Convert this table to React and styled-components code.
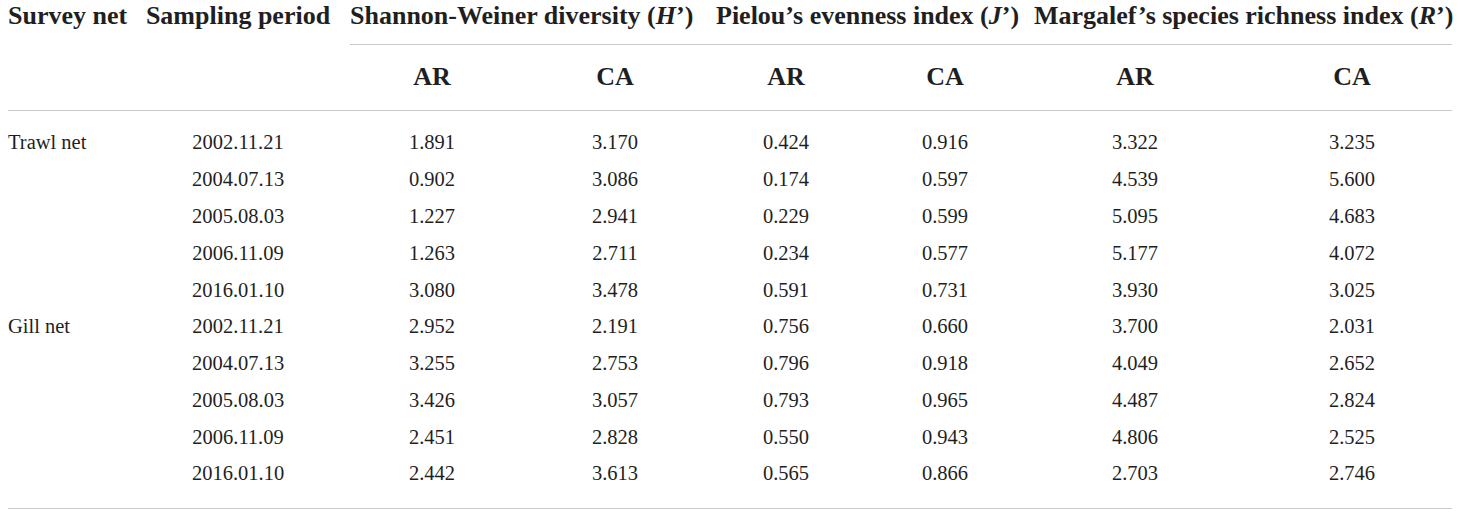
import React from "react";
import styled, { createGlobalStyle } from "styled-components";

const Global = createGlobalStyle`
  html, body { margin: 0; padding: 0; background: #fff; }
  body { font-family: "Liberation Serif", "Times New Roman", serif; color: #1f1f1f; }
`;

const Wrap = styled.div`
  padding: 0 8px;
`;

const Table = styled.table`
  width: 1444px;
  table-layout: fixed;
  border-collapse: collapse;
  border-spacing: 0;
`;

const HeadCell = styled.th`
  font-weight: 700;
  font-size: 26px;
  line-height: 30px;
  padding: 0;
  white-space: nowrap;
  text-align: ${(p) => p.$align || "center"};
  vertical-align: middle;
`;

const TopRow = styled.tr`
  height: 44px;
  & > th {
    vertical-align: top;
    padding-top: 1px;
  }
`;

const GroupCell = styled(HeadCell)`
  border-bottom: 1px solid #c9c9c9;
`;

const SubCell = styled(HeadCell)`
  padding-left: ${(p) => p.$pl || 0}px;
`;

const SubRow = styled.tr`
  height: 66px;
  & > th {
    border-bottom: 1px solid #c9c9c9;
  }
`;

const BodyRow = styled.tr`
  & > td {
    height: 36.78px;
    padding-top: ${(p) => (p.$first ? "13.6px" : "0")};
    padding-bottom: ${(p) => (p.$last ? "16.6px" : "0")};
    border-bottom: ${(p) => (p.$last ? "1px solid #c9c9c9" : "none")};
  }
`;

const Cell = styled.td`
  font-size: 20.5px;
  line-height: 24px;
  padding-left: ${(p) => p.$pl || 0}px;
  padding-right: 0;
  white-space: nowrap;
  vertical-align: middle;
  text-align: ${(p) => p.$align || "center"};
`;

const Sym = styled.i`
  font-style: italic;
`;

const COLS = [118, 224, 164, 202, 140, 178, 202, 216];

const DATA = [
  ["Trawl net", "2002.11.21", "1.891", "3.170", "0.424", "0.916", "3.322", "3.235"],
  ["", "2004.07.13", "0.902", "3.086", "0.174", "0.597", "4.539", "5.600"],
  ["", "2005.08.03", "1.227", "2.941", "0.229", "0.599", "5.095", "4.683"],
  ["", "2006.11.09", "1.263", "2.711", "0.234", "0.577", "5.177", "4.072"],
  ["", "2016.01.10", "3.080", "3.478", "0.591", "0.731", "3.930", "3.025"],
  ["Gill net", "2002.11.21", "2.952", "2.191", "0.756", "0.660", "3.700", "2.031"],
  ["", "2004.07.13", "3.255", "2.753", "0.796", "0.918", "4.049", "2.652"],
  ["", "2005.08.03", "3.426", "3.057", "0.793", "0.965", "4.487", "2.824"],
  ["", "2006.11.09", "2.451", "2.828", "0.550", "0.943", "4.806", "2.525"],
  ["", "2016.01.10", "2.442", "3.613", "0.565", "0.866", "2.703", "2.746"],
];

const SUBS = ["AR", "CA", "AR", "CA", "AR", "CA"];

export default function App() {
  return (
    <Wrap>
      <Global />
      <Table>
        <colgroup>
          {COLS.map((w, i) => (
            <col key={i} style={{ width: w }} />
          ))}
        </colgroup>
        <thead>
          <TopRow>
            <HeadCell $align="left">Survey net</HeadCell>
            <HeadCell>Sampling period</HeadCell>
            <GroupCell colSpan={2} $align="left">
              Shannon-Weiner diversity (<Sym>H</Sym>’)
            </GroupCell>
            <GroupCell colSpan={2} $align="left">
              Pielou’s evenness index (<Sym>J</Sym>’)
            </GroupCell>
            <GroupCell colSpan={2} $align="left">
              Margalef’s species richness index (<Sym>R</Sym>’)
            </GroupCell>
          </TopRow>
          <SubRow>
            <SubCell />
            <SubCell />
            {SUBS.map((s, i) => (
              <SubCell key={i} $pl={i === 5 ? 16 : 0}>
                {s}
              </SubCell>
            ))}
          </SubRow>
        </thead>
        <tbody>
          {DATA.map((row, r) => (
            <BodyRow key={r} $first={r === 0} $last={r === DATA.length - 1}>
              {row.map((v, c) => (
                <Cell key={c} $align={c === 0 ? "left" : "center"} $pl={c === 7 ? 16 : 0}>
                  {v}
                </Cell>
              ))}
            </BodyRow>
          ))}
        </tbody>
      </Table>
    </Wrap>
  );
}
